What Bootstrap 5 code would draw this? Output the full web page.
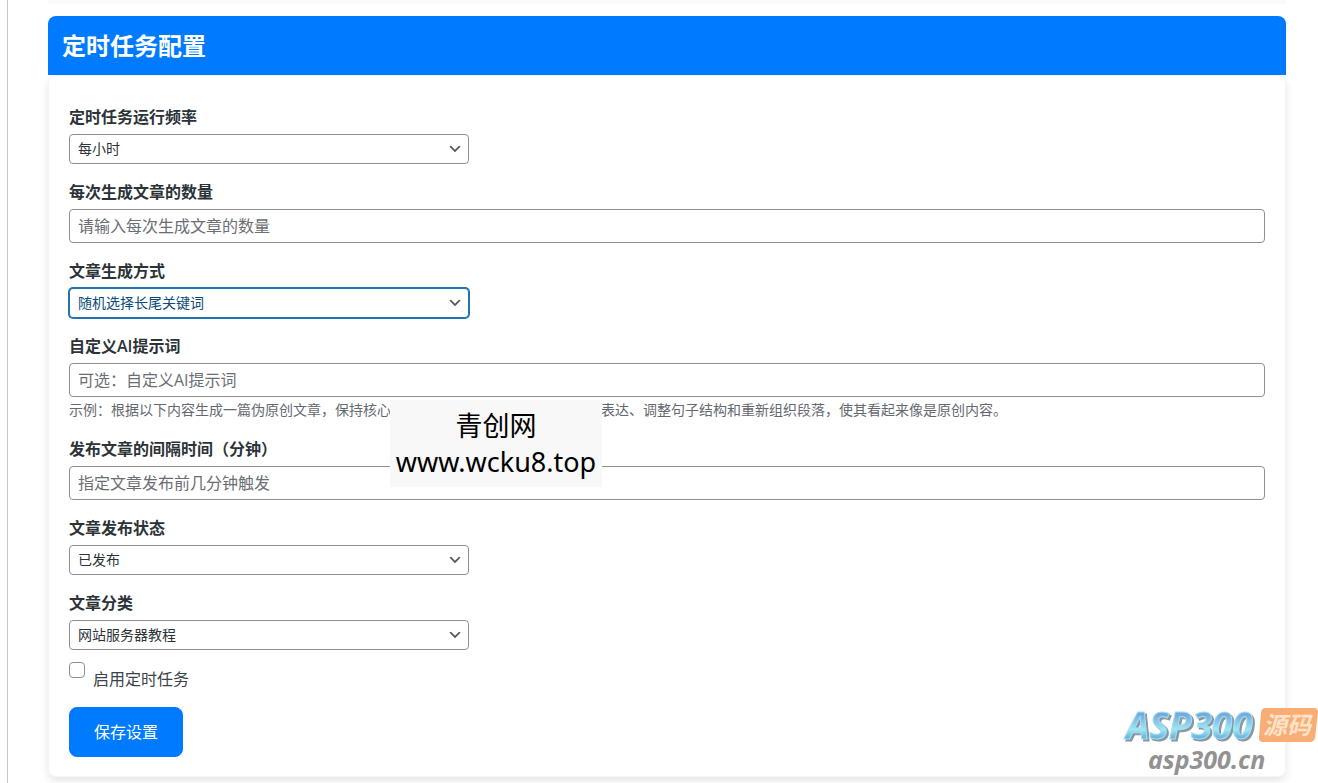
<!DOCTYPE html>
<html lang="zh-CN">
<head>
<meta charset="utf-8">
<meta name="viewport" content="width=device-width, initial-scale=1">
<title>定时任务配置</title>
<link href="https://cdn.jsdelivr.net/npm/bootstrap@5.3.0/dist/css/bootstrap.min.css" rel="stylesheet">
<style>
  body { font-family: "Open Sans", "Noto Sans CJK SC", sans-serif; font-size: 16px; line-height: 24px; color: #3c434a; background: #fff; }
  .admin-pane { margin-left: 7px; border-left: 1px solid #c8c9cb; padding: 0 32px 6px 40px; min-height: 100vh; }
  .previous-panel { height: 4px; margin-bottom: 12px; background: #fafafa; }
  .panel-title { background: #007bff; color: #fff; font-size: 24px; font-weight: 700; line-height: 29px; padding: 15px 14px; border-radius: 8px 8px 0 0; }
  .panel-form { border: 1px solid #f4f4f4; border-radius: 8px; padding: 29px 20px 19px; box-shadow: 0 4px 8px rgba(0,0,0,.1); }
  .form-label { display: block; font-weight: 600; color: #2c3338; margin-bottom: 5px; }
  .form-select, .form-control { border: 1px solid #8c8f94; border-radius: 4px; padding: 0 8px; }
  .form-select { max-width: 400px; height: 30px; font-size: 14px; line-height: 28px; color: #2c3338; background-size: 16px 16px; background-position: right 5px top 50%;
    background-image: url("data:image/svg+xml,%3Csvg xmlns='http://www.w3.org/2000/svg' viewBox='0 0 20 20'%3E%3Cpath d='M5 6l5 5 5-5 2 1-7 7-7-7 2-1z' fill='%23555'/%3E%3C/svg%3E"); }
  .form-select.is-current, .form-select:focus { border-color: #2271b1; color: #0a4b78; box-shadow: 0 0 0 1px #2271b1; }
  .form-control { height: 34px; font-size: 16px; line-height: 24px; }
  .form-control::placeholder { color: #6b6e72; }
  .form-text { font-size: 14px; line-height: 20px; margin-top: 3px; margin-bottom: 17px; color: #646970; }
  .hint-gap { display: inline-block; width: 15em; }
  .form-check-input { width: 16px; height: 16px; border: 1px solid #8c8f94; }
  .enable-label { line-height: 20px; margin: 7px 0 18px; }
  .btn-save { background: #007bff; color: #fff; font-size: 16px; line-height: 24px; padding: 12px 23px; border: 1px solid #007bff; border-radius: 8px; width: 114px; }
  .site-mark { left: 390px; top: 400px; width: 212px; height: 87px; padding-top: 8px; background: #f8f8f8; color: #000; font-family: "Noto Sans", "Noto Sans CJK SC", sans-serif; font-size: 27px; line-height: 36px; }
  .source-mark { right: 0; bottom: 0; width: 200px; height: 80px; }
  .source-mark text { font-family: "Noto Sans", "Noto Sans CJK SC", sans-serif; font-style: italic; font-weight: 700; }
  .logo-word { filter: drop-shadow(2px 2px 0 #8797a2); }
</style>
</head>
<body>
<div class="position-relative overflow-hidden">
  <main class="admin-pane">
    <div class="previous-panel"></div>
    <h1 class="panel-title mb-0">定时任务配置</h1>
    <form class="panel-form">
      <div class="mb-3">
        <label class="form-label" for="frequency">定时任务运行频率</label>
        <select class="form-select" id="frequency"><option>每小时</option></select>
      </div>
      <div class="mb-3">
        <label class="form-label" for="amount">每次生成文章的数量</label>
        <input class="form-control" id="amount" type="text" placeholder="请输入每次生成文章的数量">
      </div>
      <div class="mb-3">
        <label class="form-label" for="method">文章生成方式</label>
        <select class="form-select is-current" id="method"><option>随机选择长尾关键词</option></select>
      </div>
      <div>
        <label class="form-label" for="prompt">自定义AI提示词</label>
        <input class="form-control" id="prompt" type="text" placeholder="可选：自定义AI提示词">
        <div class="form-text">示例：根据以下内容生成一篇伪原创文章，保持核心<span class="hint-gap"></span>表达、调整句子结构和重新组织段落，使其看起来像是原创内容。</div>
      </div>
      <div class="mb-3">
        <label class="form-label" for="interval">发布文章的间隔时间（分钟）</label>
        <input class="form-control" id="interval" type="text" placeholder="指定文章发布前几分钟触发">
      </div>
      <div class="mb-3">
        <label class="form-label" for="status">文章发布状态</label>
        <select class="form-select" id="status"><option>已发布</option></select>
      </div>
      <div>
        <label class="form-label" for="category">文章分类</label>
        <select class="form-select" id="category"><option>网站服务器教程</option></select>
      </div>
      <div class="d-flex align-items-start gap-2 pt-2 mt-1">
        <input class="form-check-input m-0" id="enabled" type="checkbox">
        <label class="enable-label" for="enabled">启用定时任务</label>
      </div>
      <button class="btn btn-save" type="button">保存设置</button>
    </form>
  </main>
  <div class="site-mark position-absolute text-center text-nowrap">青创网<br>www.wcku8.top</div>
  <svg class="source-mark position-absolute" viewBox="0 0 200 80" role="img" aria-label="ASP300源码 asp300.cn">
    <defs>
      <linearGradient id="sky" x1="0" y1="0" x2="0" y2="1">
        <stop offset="0.3" stop-color="#74a9dd"/><stop offset="0.6" stop-color="#9de8f5"/><stop offset="0.8" stop-color="#5ba6d6"/>
      </linearGradient>
    </defs>
    <text class="logo-word" x="8" y="36" font-size="37" fill="url(#sky)" stroke="#a5dff0" stroke-width="1">ASP300</text>
    <path d="M147 5h49q4 0 4 4l-3 26q-1 4-5 4h-47q-4 0-4-4l2-26q1-4 4-4z" fill="#f7ad74"/>
    <text x="145" y="31" font-size="24" fill="#fde2cb">源码</text>
    <text x="30" y="66" font-size="25" fill="#929292">asp300.cn</text>
  </svg>
</div>
<script src="https://cdn.jsdelivr.net/npm/bootstrap@5.3.0/dist/js/bootstrap.bundle.min.js"></script>
</body>
</html>
